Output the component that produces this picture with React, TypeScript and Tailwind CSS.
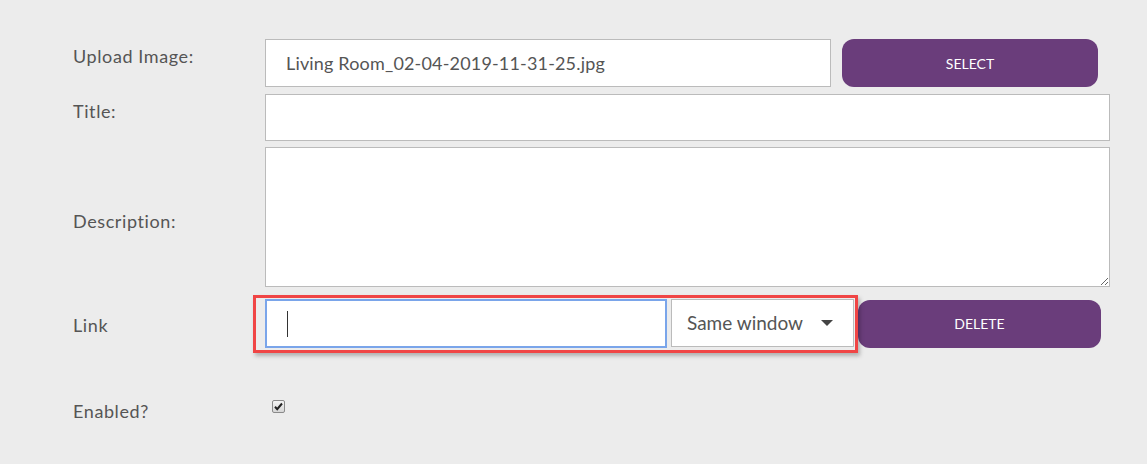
import React, { useState } from "react";

const fontStack = { fontFamily: "Lato, 'Liberation Sans', sans-serif" };

const Label: React.FC<{ children: React.ReactNode; className?: string }> = ({
  children,
  className = "",
}) => (
  <div
    className={`w-[192px] shrink-0 text-[18px] leading-6 tracking-[0.6px] text-[#555] ${className}`}
  >
    {children}
  </div>
);

const App: React.FC = () => {
  const [enabled, setEnabled] = useState<boolean>(true);

  return (
    <div className="min-h-screen bg-[#ececec] pl-[73px] pt-[39px]" style={fontStack}>
      {/* upload */}
      <div className="flex h-[48px]">
        <Label className="pt-[5px]">Upload Image:</Label>
        <div className="flex h-[48px] w-[566px] items-center border border-[#bbb] bg-white pl-[20px] text-[18px] tracking-[0.17px] text-[#555]">
          Living Room_02-04-2019-11-31-25.jpg
        </div>
        <button className="ml-[11px] h-[48px] w-[256px] rounded-[12px] bg-[#6a3d7b] text-[14px] text-white">
          SELECT
        </button>
      </div>

      {/* title */}
      <div className="mt-[7px] flex h-[47px]">
        <Label className="pt-[5px]">Title:</Label>
        <input className="h-[47px] w-[845px] border border-[#bbb] bg-white outline-none" />
      </div>

      {/* description */}
      <div className="mt-[6px] flex h-[140px] items-center">
        <Label className="mt-[8px]">Description:</Label>
        <textarea className="h-[140px] w-[845px] resize border border-[#bbb] bg-white outline-none" />
      </div>

      {/* link */}
      <div className="mt-[12px] flex h-[49px] items-center">
        <Label className="mt-[3px] w-[191px]">Link</Label>
        <div className="relative flex h-[49px]">
          <div className="flex h-[49px] w-[402px] items-center border-2 border-[#7aa5ea] bg-white pl-[20px]">
            <span className="h-[26px] w-px bg-[#333]" />
          </div>
          <div className="ml-[4px] flex h-[48px] w-[183px] items-center justify-between border border-[#bbb] bg-white pl-[15px] pr-[20px] text-[19px] text-[#555]">
            <span>Same window</span>
            <svg width="12" height="6" viewBox="0 0 12 6">
              <path d="M0 0h12L6 6z" fill="#444" />
            </svg>
          </div>
          <div className="pointer-events-none absolute left-[-12px] top-[-4px] h-[58px] w-[605px] border-[3px] border-[#f04545] shadow-[2px_3px_4px_rgba(0,0,0,0.25)]" />
        </div>
        <button className="ml-[4px] h-[48px] w-[243px] rounded-[12px] bg-[#6a3d7b] text-[14px] text-white">
          DELETE
        </button>
      </div>

      {/* enabled */}
      <div className="mt-[48px] flex items-center">
        <Label className="mt-[3px] w-[199px]">Enabled?</Label>
        <button
          onClick={() => setEnabled((v) => !v)}
          className="mt-[-6px] flex h-[13px] w-[13px] items-center justify-center rounded-[2px] border border-[#8a8a8a] bg-gradient-to-b from-[#f4f4f4] to-[#d6d6d6]"
        >
          {enabled && (
            <svg width="9" height="9" viewBox="0 0 9 9">
              <path d="M1 4.8l2.2 2.4L8 1.5" stroke="#222" strokeWidth="2" fill="none" />
            </svg>
          )}
        </button>
      </div>
    </div>
  );
};

export default App;
